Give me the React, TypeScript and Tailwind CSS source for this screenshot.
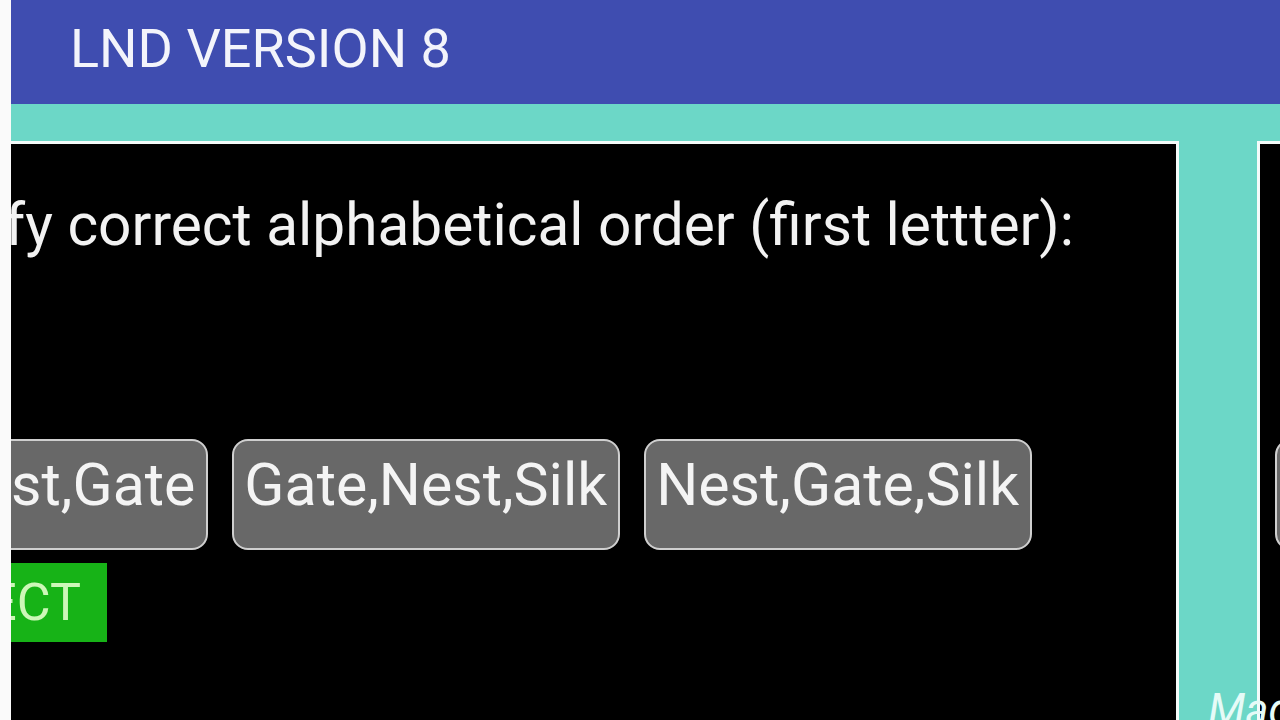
import React from "react";

const answers = ["Silk,Nest,Gate", "Gate,Nest,Silk", "Nest,Gate,Silk"];

function AnswerButton({ label }: { label: string }) {
  return (
    <button className="shrink-0 h-[111px] px-[10.5px] pb-[20px] rounded-[16px] border-2 border-[#cfcfcf] bg-[#686868] text-[#f4f4f4] text-[59px] leading-none whitespace-nowrap">
      {label}
    </button>
  );
}

function QuestionPanel({ question, first }: { question: string; first?: boolean }) {
  return (
    <div
      className={
        "shrink-0 w-[1377px] h-[640px] border-[3px] border-[#f4fbfa] bg-black " +
        (first ? "ml-[-209px]" : "")
      }
    >
      <div className="pt-[47px] pl-[54px] text-[58.6px] leading-[68px] text-[#f2f2f2] whitespace-nowrap">
        {question}
      </div>
      <div className="mt-[180px] pl-[15px] flex gap-[24px]">
        {answers.map((a) => (
          <AnswerButton key={a} label={a} />
        ))}
      </div>
      {first && (
        <div className="mt-[13px] ml-[42px] w-[260px] h-[79px] bg-[#17b317] flex items-center justify-end pr-[26px] text-[52px] leading-none text-[#cdf7b8]">
          CORRECT
        </div>
      )}
    </div>
  );
}

export default function App() {
  return (
    <div
      className="relative w-[1280px] h-[720px] overflow-hidden flex bg-[#fafafa]"
      style={{ fontFamily: "Roboto, 'Noto Sans', sans-serif" }}
    >
      <div className="w-[11px] shrink-0 bg-[#fafafa]" />
      <div className="flex-1 flex flex-col overflow-hidden">
        <header className="h-[104px] shrink-0 bg-[#3f4db0] flex items-center pl-[59px] pb-[6px]">
          <h1 className="text-[54px] leading-none text-[#f3f4fb]">LND VERSION 8</h1>
        </header>
        <div className="flex-1 bg-[#6cd7c7] pt-[37px] overflow-hidden">
          <div className="flex gap-[78px]">
            <QuestionPanel first question="Identify correct alphabetical order (first lettter):" />
            <QuestionPanel question="Identify correct alphabetical order (first lettter):" />
          </div>
        </div>
      </div>
      <span className="absolute left-[1208px] top-[688px] text-[44px] italic text-[#e6fbf7] leading-none">
        Made
      </span>
    </div>
  );
}
